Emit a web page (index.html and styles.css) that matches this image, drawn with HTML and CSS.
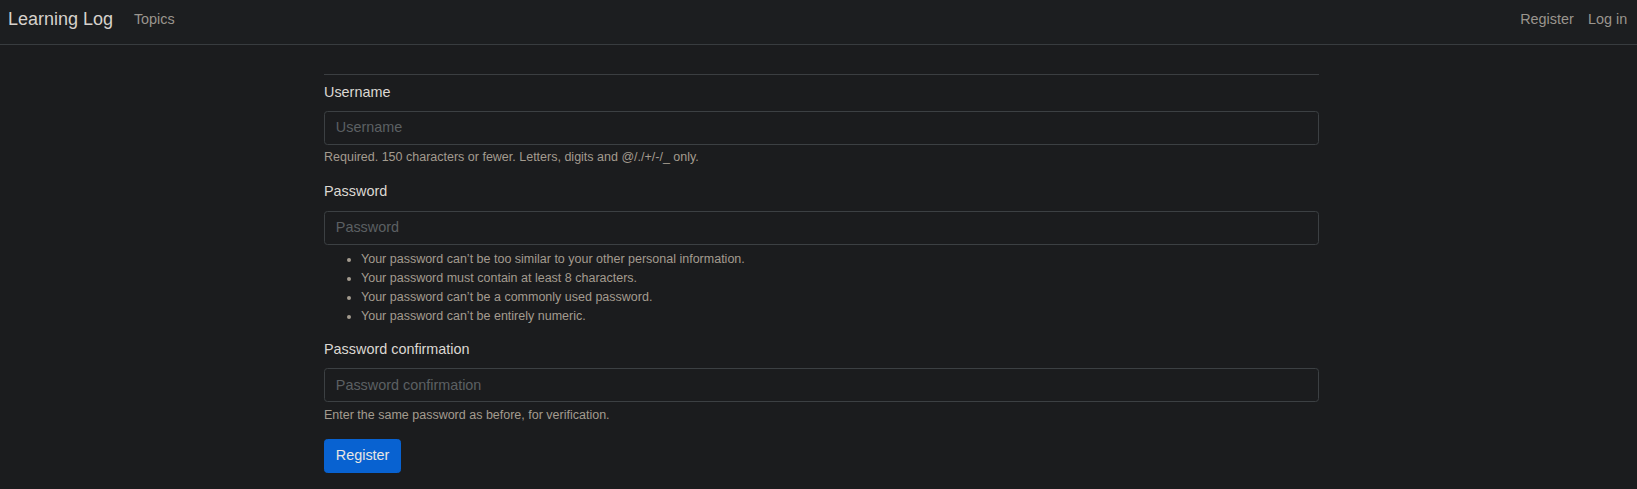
FILE: index.html
```html
<!DOCTYPE html>
<html lang="en">
<head>
<meta charset="utf-8">
<title>Learning Log</title>
<link rel="stylesheet" href="styles.css">
</head>
<body>
<nav class="navbar">
  <div class="nav-left">
    <a class="brand" href="#">Learning Log</a>
    <a class="nav-link" href="#">Topics</a>
  </div>
  <div class="nav-right">
    <a class="nav-link" href="#">Register</a>
    <a class="nav-link" href="#">Log in</a>
  </div>
</nav>
<main class="container">
  <hr class="rule">
  <form class="form">
    <div class="group">
      <label class="label" for="u">Username</label>
      <input class="control" id="u" type="text" placeholder="Username">
      <div class="help">Required. 150 characters or fewer. Letters, digits and @/./+/-/_ only.</div>
    </div>
    <div class="group group-list">
      <label class="label" for="p1">Password</label>
      <input class="control" id="p1" type="password" placeholder="Password">
      <ul class="help help-list">
        <li>Your password can’t be too similar to your other personal information.</li>
        <li>Your password must contain at least 8 characters.</li>
        <li>Your password can’t be a commonly used password.</li>
        <li>Your password can’t be entirely numeric.</li>
      </ul>
    </div>
    <div class="group">
      <label class="label" for="p2">Password confirmation</label>
      <input class="control" id="p2" type="password" placeholder="Password confirmation">
      <div class="help">Enter the same password as before, for verification.</div>
    </div>
    <button class="btn" type="button">Register</button>
  </form>
</main>
</body>
</html>
```

FILE: styles.css
```css
* { box-sizing: border-box; }
html, body { margin: 0; padding: 0; }
body {
  background: #1b1c1e;
  color: #e0ddd8;
  font-family: "Liberation Sans", Arial, sans-serif;
  font-size: 14.4px;
  line-height: 1.5;
}
a { text-decoration: none; }

.navbar {
  height: 45px;
  background: #1c1e20;
  border-bottom: 1px solid #383c3f;
  display: flex;
  justify-content: space-between;
  align-items: center;
  padding: 0 2.5px 5px 8px;
}
.nav-left, .nav-right { display: flex; align-items: center; }
.brand {
  font-size: 18px;
  line-height: 27px;
  color: #d6d2cc;
  margin-right: 13.6px;
}
.nav-link {
  color: #9a958e;
  padding: 0 7.2px;
  line-height: 21.6px;
}

.container {
  width: 1001px;
  margin: 0 auto;
  padding-left: 6px;
}
.rule {
  border: 0;
  border-top: 1px solid #3b3e41;
  margin: 29px 0 6.6px;
  height: 0;
}
.group { margin-bottom: 14.4px; }
.label {
  display: block;
  color: #dcd8d3;
  margin-bottom: 7.6px;
}
.control {
  display: block;
  width: 100%;
  height: 34px;
  padding: 4.8px 10.8px 6px;
  font: inherit;
  line-height: 21.6px;
  color: #dcd8d3;
  background: #1b1c1e;
  border: 1px solid #3c4043;
  border-radius: 3.4px;
  outline: none;
}
.control::placeholder { color: #5c6063; opacity: 1; }
.help {
  margin-top: 3.4px;
  font-size: 12.5px;
  line-height: 18.9px;
  color: #a39b8f;
}
.group-list { margin-bottom: 12.4px; }
.help-list {
  margin-top: 5.2px;
  margin-bottom: 0;
  padding-left: 37px;
}
.help-list li { line-height: 19.2px; }
.btn {
  display: block;
  margin-top: 14.6px;
  height: 34px;
  padding: 0 10.8px;
  font: inherit;
  line-height: 21.6px;
  color: #e8e6e3;
  background: #0862d1;
  border: 1px solid #0862d1;
  border-radius: 3.4px;
}
```
